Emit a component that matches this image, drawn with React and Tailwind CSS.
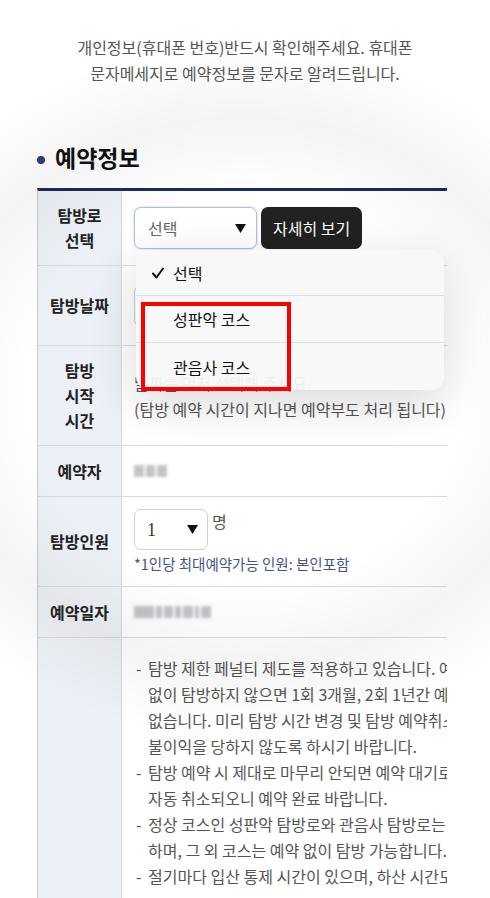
import React from "react";

const font = { fontFamily: '"Noto Sans CJK KR", "Noto Sans", sans-serif' };

function Tri({ className = "" }) {
  return (
    <svg width="11" height="9" viewBox="0 0 11 9" className={className}>
      <polygon points="0,0 11,0 5.5,9" fill="#111" />
    </svg>
  );
}

function Row({ label, h, children, className = "" }) {
  return (
    <div className={`flex border-b border-[#d9dae0] ${h}`}>
      <div className="w-[84px] shrink-0 bg-[#eef0f7] border-r border-[#d6d8e0] flex items-center justify-center text-center font-bold text-[16px] leading-[25px] text-[#222]">
        {label}
      </div>
      <div className={`flex-1 min-w-0 pl-[12px] ${className}`}>{children}</div>
    </div>
  );
}

function Blur({ w }) {
  return (
    <div className="flex gap-[2px] blur-[1.5px]">
      {w.map((x, i) => (
        <div key={i} className="h-[12px] bg-[#c4c4c8]" style={{ width: x }} />
      ))}
    </div>
  );
}

const notes = [
  [
    "탐방 제한 페널티 제도를 적용하고 있습니다. 예약 후 취소",
    "없이 탐방하지 않으면 1회 3개월, 2회 1년간 예약할 수",
    "없습니다. 미리 탐방 시간 변경 및 탐방 예약취소를 하여",
    "불이익을 당하지 않도록 하시기 바랍니다.",
  ],
  ["탐방 예약 시 제대로 마무리 안되면 예약 대기로 남아", "자동 취소되오니 예약 완료 바랍니다."],
  ["정상 코스인 성판악 탐방로와 관음사 탐방로는 예약을 해야", "하며, 그 외 코스는 예약 없이 탐방 가능합니다."],
  ["절기마다 입산 통제 시간이 있으며, 하산 시간도 지켜야"],
];

export default function App() {
  return (
    <div className="relative w-[490px] h-[898px] overflow-hidden bg-white" style={font}>
      <div className="pt-[34px] text-center text-[16px] leading-[26px] text-[#555]">
        <p>개인정보(휴대폰 번호)반드시 확인해주세요. 휴대폰</p>
        <p>문자메세지로 예약정보를 문자로 알려드립니다.</p>
      </div>

      <div className="mt-[58px] ml-[37px] flex items-center gap-[10px] h-[26px]">
        <span className="w-[8px] h-[8px] rounded-full bg-[#2f3d87] mt-[6px]" />
        <span className="text-[23px] font-bold text-[#111] leading-[26px]">예약정보</span>
      </div>

      <div className="mt-[18px] ml-[37px] w-[410px] border-t-[3px] border-t-[#1f2a5c] border-l border-l-[#c9c9ce] overflow-hidden">
        <Row label={<>탐방로<br />선택</>} h="h-[75px]" className="flex items-center gap-[4px]">
          <div className="w-[123px] h-[42px] rounded-[7px] border border-[#a9c1e2] bg-white flex items-center justify-between pl-[13px] pr-[10px] text-[16px] text-[#666] shadow-[0_0_0_1px_rgba(170,195,230,0.25)]">
            <span>선택</span>
            <Tri />
          </div>
          <div className="h-[42px] px-[12px] rounded-[7px] bg-[#222] text-white text-[16px] flex items-center">자세히 보기</div>
        </Row>
        <Row label="탐방날짜" h="h-[80px]" className="flex items-center">
          <div className="w-[160px] h-[40px] rounded-[6px] border border-[#cfcfd4] bg-white" />
        </Row>
        <Row label={<>탐방<br />시작<br />시간</>} h="h-[100px]" className="flex flex-col justify-center text-[16px] leading-[26px] text-[#555] whitespace-nowrap">
          <p>날짜를 먼저 선택해 주세요.</p>
          <p>(탐방 예약 시간이 지나면 예약부도 처리 됩니다)</p>
        </Row>
        <Row label="예약자" h="h-[51px]" className="flex items-center">
          <Blur w={[10, 9, 10]} />
        </Row>
        <Row label="탐방인원" h="h-[90px]" className="pt-[12px]">
          <div className="flex items-start gap-[4px]">
            <div className="w-[74px] h-[41px] rounded-[7px] border border-[#cfcfd4] bg-white flex items-center justify-between pl-[12px] pr-[9px]">
              <span className="text-[18px] text-[#333] mt-[2px]" style={{ fontFamily: '"Liberation Serif", serif' }}>1</span>
              <Tri />
            </div>
            <span className="text-[16px] text-[#555] leading-[20px] mt-[2px]">명</span>
          </div>
          <p className="mt-[4px] text-[14.5px] leading-[20px] text-[#44548a] whitespace-nowrap">*1인당 최대예약가능 인원: 본인포함</p>
        </Row>
        <Row label="예약일자" h="h-[51px]" className="flex items-center">
          <Blur w={[20, 6, 9, 6, 10, 4, 10]} />
        </Row>
        <div className="flex h-[300px]">
          <div className="w-[84px] shrink-0 bg-[#eef0f7] border-r border-[#d6d8e0]" />
          <div className="flex-1 min-w-0 pt-[17px] pl-[14px] text-[16px] leading-[26px] text-[#555] whitespace-nowrap">
            {notes.map((item, i) =>
              item.map((line, j) => (
                <div key={i + "-" + j} className="flex">
                  <span className="w-[12px] shrink-0">{j === 0 ? "-" : ""}</span>
                  <span>{line}</span>
                </div>
              ))
            )}
          </div>
        </div>
      </div>

      {/* dim vignette */}
      <div className="pointer-events-none absolute left-[-150px] top-[40px] w-[790px] h-[700px] bg-[radial-gradient(closest-side,rgba(0,0,0,0)_55%,rgba(0,0,0,0.045)_78%,rgba(0,0,0,0)_100%)]" />

      {/* popover menu */}
      <div className="absolute left-[136px] top-[250px] w-[308px] h-[140px] rounded-[14px] bg-[#f8f8f8]/95 shadow-[0_12px_48px_rgba(0,0,0,0.16)] text-[16px] text-[#111]">
        <div className="h-[46px] flex items-center pl-[16px] border-b border-[#dedede]">
          <svg width="12" height="12" viewBox="0 0 12 12" className="mr-[9px]">
            <polyline points="1,6.5 4.5,10.5 11,1.5" fill="none" stroke="#111" strokeWidth="2" strokeLinecap="round" strokeLinejoin="round" />
          </svg>
          <span>선택</span>
        </div>
        <div className="h-[47px] flex items-center pl-[37px] border-b border-[#dedede]">성판악 코스</div>
        <div className="h-[47px] flex items-center pl-[37px]">관음사 코스</div>
        <div className="absolute left-[5px] top-[52px] w-[150px] h-[89px] border-[4px] border-[#ff0000]" />
      </div>
    </div>
  );
}
